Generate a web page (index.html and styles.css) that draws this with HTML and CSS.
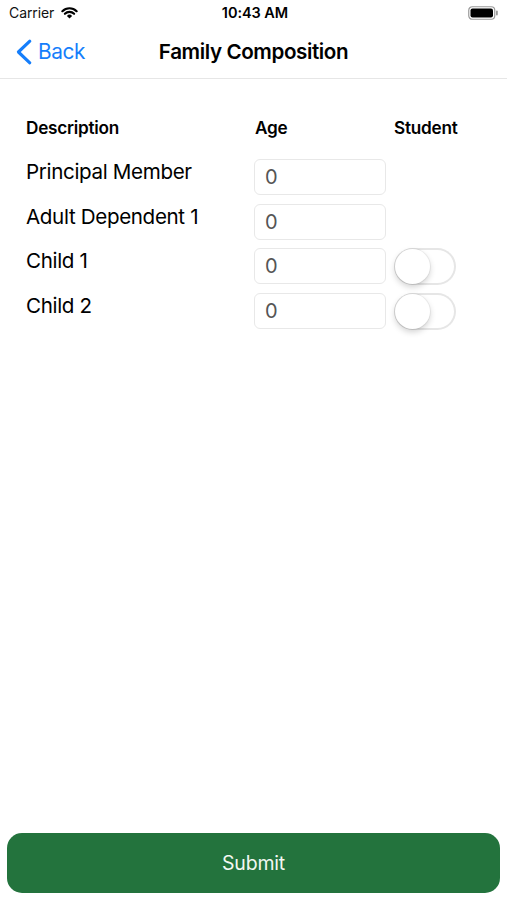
FILE: index.html
```html
<!DOCTYPE html>
<html lang="en">
<head>
<meta charset="utf-8">
<title>Family Composition</title>
<link rel="stylesheet" href="styles.css">
</head>
<body>
<div class="screen">
  <div class="statusbar">
    <div class="sb-left">
      <span class="carrier">Carrier</span>
      <svg class="wifi" width="17" height="13" viewBox="0 0 17 13">
        <path d="M1.4 5.2 A10 10 0 0 1 15.6 5.2" fill="none" stroke="#000" stroke-width="2.2" stroke-linecap="round"/>
        <path d="M3.9 7.8 A6.5 6.5 0 0 1 13.1 7.8" fill="none" stroke="#000" stroke-width="2.2" stroke-linecap="round"/>
        <path d="M8.5 12.4 L5.9 9.9 A3.7 3.7 0 0 1 11.1 9.9 Z" fill="#000"/>
      </svg>
    </div>
    <div class="sb-time">10:43 AM</div>
    <div class="sb-right">
      <svg class="battery" width="31" height="14" viewBox="0 0 31 14">
        <rect x="0.75" y="0.75" width="26" height="12.5" rx="3.5" fill="none" stroke="#9a9a9a" stroke-width="1.2"/>
        <rect x="2.5" y="2.5" width="22.5" height="9" rx="2" fill="#000"/>
        <rect x="28" y="4.6" width="1.8" height="4.8" rx="0.9" fill="#9a9a9a"/>
      </svg>
    </div>
  </div>
  <div class="navbar">
    <a class="back" href="#">
      <svg class="chev" width="18" height="26" viewBox="0 0 18 26">
        <path d="M14.8 2.2 L3.4 13 L14.8 23.8" fill="none" stroke="#157efb" stroke-width="3.1" stroke-linecap="round" stroke-linejoin="round"/>
      </svg>
      <span>Back</span>
    </a>
    <div class="title">Family Composition</div>
    <div></div>
  </div>
  <main class="content">
    <div class="grid">
      <div class="head">Description</div>
      <div class="head">Age</div>
      <div class="head">Student</div>

      <div class="label">Principal Member</div>
      <div class="field">0</div>
      <div></div>

      <div class="label">Adult Dependent 1</div>
      <div class="field">0</div>
      <div></div>

      <div class="label">Child 1</div>
      <div class="field">0</div>
      <div class="switch"><span class="knob"></span></div>

      <div class="label">Child 2</div>
      <div class="field">0</div>
      <div class="switch"><span class="knob"></span></div>
    </div>
  </main>
  <button class="submit">Submit</button>
</div>
</body>
</html>
```
FILE: styles.css
```css
* { box-sizing: border-box; }
html, body { margin: 0; padding: 0; background: #fff; }
body { font-family: Inter, "Noto Sans", "Liberation Sans", sans-serif; color: #000; }

.screen {
  width: 507px;
  height: 900px;
  display: flex;
  flex-direction: column;
}

.statusbar {
  height: 25px;
  display: grid;
  grid-template-columns: 1fr auto 1fr;
  align-items: center;
  padding: 0 8px 0 9px;
}
.sb-left { display: flex; align-items: center; gap: 7px; }
.carrier { font-size: 14px; letter-spacing: -0.1px; color: #111; }
.wifi { margin-top: -1px; }
.sb-time { font-size: 14.5px; font-weight: 600; letter-spacing: -0.05px; padding-left: 2px; }
.sb-right { display: flex; justify-content: flex-end; }

.navbar {
  height: 54px;
  display: grid;
  grid-template-columns: 1fr auto 1fr;
  align-items: center;
  border-bottom: 1.5px solid #e6e6e6;
}
.back {
  display: flex;
  align-items: center;
  gap: 5px;
  padding-left: 15px;
  color: #157efb;
  text-decoration: none;
  font-size: 20.8px;
  letter-spacing: -0.4px;
}
.title {
  font-size: 20.6px;
  font-weight: 600;
  letter-spacing: -0.4px;
}

.content {
  flex: 1;
  padding: 38px 0 0 26px;
}
.grid {
  display: grid;
  grid-template-columns: 220px 132px 62px;
  column-gap: 8px;
  row-gap: 8.3px;
  align-items: start;
}
.head {
  font-size: 17.2px;
  font-weight: 600;
  letter-spacing: -0.25px;
  margin-bottom: 13px;
}
.head:nth-child(2) { padding-left: 1px; }
.label {
  font-size: 20.6px;
  letter-spacing: -0.35px;
  line-height: 25px;
}
.field {
  height: 36px;
  border: 1px solid #e8e8e8;
  border-radius: 6px;
  padding-left: 10px;
  font-size: 20px;
  color: #555;
  display: flex;
  align-items: center;
}
.switch {
  width: 62px;
  height: 37px;
  border-radius: 19px;
  box-shadow: inset 0 0 0 2px #e6e6e6;
  position: relative;
}
.knob {
  position: absolute;
  left: 1px;
  top: 1px;
  width: 35px;
  height: 35px;
  border-radius: 50%;
  background: #fff;
  box-shadow: 0 3px 6px rgba(0,0,0,0.18), 0 0 0 1px rgba(0,0,0,0.05);
}

.submit {
  margin: 0 7px 7px;
  height: 60px;
  border: none;
  border-radius: 15px;
  background: #23733d;
  color: #f2f7f2;
  font-family: inherit;
  font-size: 19.5px;
  letter-spacing: -0.2px;
}
```
